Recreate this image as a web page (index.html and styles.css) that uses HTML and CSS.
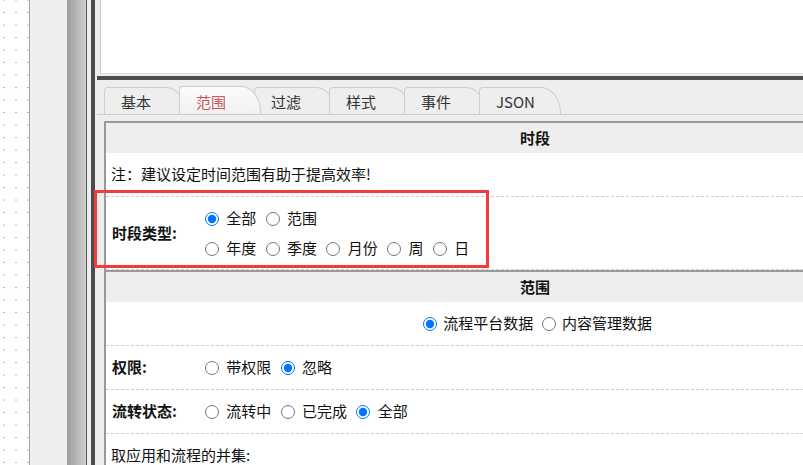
FILE: index.html
```html
<!DOCTYPE html>
<html lang="zh-CN">
<head>
<meta charset="utf-8">
<title>范围</title>
<link rel="stylesheet" href="styles.css">
</head>
<body>
<div class="app">
  <div class="canvas"></div>
  <div class="side"></div>
  <div class="splitter"></div>
  <div class="gap"></div>
  <div class="darkcol"></div>
  <div class="main">
    <div class="preview"></div>
    <div class="darkbar"></div>
    <div class="tabs">
      <div class="tab">基本</div>
      <div class="tab active">范围</div>
      <div class="tab">过滤</div>
      <div class="tab">样式</div>
      <div class="tab">事件</div>
      <div class="tab">JSON</div>
    </div>
    <div class="panel">
      <div class="head">时段</div>
      <div class="row note">注：建议设定时间范围有助于提高效率!</div>
      <div class="row form two">
        <div class="label">时段类型:</div>
        <div class="opts">
          <input type="radio" name="period" checked> 全部 <input type="radio" name="period"> 范围<br>
          <input type="radio" name="period"> 年度 <input type="radio" name="period"> 季度 <input type="radio" name="period"> 月份 <input type="radio" name="period"> 周 <input type="radio" name="period"> 日
        </div>
      </div>
      <div class="head">范围</div>
      <div class="row center">
        <input type="radio" name="src" checked> 流程平台数据 <input type="radio" name="src"> 内容管理数据
      </div>
      <div class="row form">
        <div class="label">权限:</div>
        <div class="opts">
          <input type="radio" name="perm"> 带权限 <input type="radio" name="perm" checked> 忽略
        </div>
      </div>
      <div class="row form">
        <div class="label">流转状态:</div>
        <div class="opts">
          <input type="radio" name="state"> 流转中 <input type="radio" name="state"> 已完成 <input type="radio" name="state" checked> 全部
        </div>
      </div>
      <div class="row note">取应用和流程的并集:</div>
    </div>
  </div>
</div>
<div class="highlight"></div>
</body>
</html>
```
FILE: styles.css
```css
html, body {
  margin: 0;
  padding: 0;
  height: 100%;
  overflow: hidden;
}
body {
  font-family: "Noto Sans CJK SC", "Microsoft YaHei", sans-serif;
  font-size: 15px;
  color: #111;
  background: #eee;
  position: relative;
}
.app {
  display: flex;
  height: 100vh;
}
.canvas {
  flex: 0 0 29px;
  border-right: 1px solid #a6a6a6;
  background-color: #fff;
  background-image: radial-gradient(circle, #b4b4b4 0.8px, transparent 1px);
  background-size: 12px 12.5px;
  background-position: -2px 6.3px;
}
.side {
  flex: 0 0 37px;
  background: #eee;
}
.splitter {
  flex: 0 0 19px;
  background: linear-gradient(to right, #9c9c9c, #d0d0d0);
  border-right: 1px solid #555;
}
.gap {
  flex: 0 0 4px;
  background: #eee;
}
.darkcol {
  flex: 0 0 4px;
  background: #4d4d4d;
}
.main {
  flex: 1 1 auto;
  min-width: 0;
  display: flex;
  flex-direction: column;
  background: #eee;
}
.preview {
  height: 73px;
  flex: 0 0 auto;
  margin-left: 5px;
  background: #fff;
  border-left: 1px solid #ccc;
  border-bottom: 1px solid #ddd;
}
.darkbar {
  height: 4px;
  flex: 0 0 auto;
  margin: 2px 0 0 2px;
  background: #4d4d4d;
}
.tabs {
  display: flex;
  align-items: flex-end;
  flex: 0 0 auto;
  margin-left: 2px;
  padding: 6px 0 0 7px;
  border-bottom: 1px solid #ccc;
}
.tab {
  position: relative;
  box-sizing: border-box;
  width: 82px;
  height: 27px;
  margin-left: -7px;
  padding: 3px 0 0 16px;
  line-height: 22px;
  font-size: 15px;
  color: #333;
  background: #eee;
  border: 1px solid #cdcdcd;
  border-bottom: 0;
  border-radius: 4px 20px 0 0 / 4px 26px 0 0;
}
.tab:first-child {
  margin-left: 0;
}
.tab.active {
  z-index: 10;
  height: 28px;
  padding-top: 4px;
  color: #d2555f;
  background: linear-gradient(#fbfbfb, #f1f1f1);
}
.panel {
  flex: 0 0 auto;
  width: 858px;
  margin: 6px 0 0 9px;
  border-left: 2px solid #999;
  background: #fff;
}
.head {
  border-top: 2px solid #999;
  background: #eee;
  line-height: 30px;
  text-align: center;
  font-weight: bold;
}
.row {
  padding: 6px 0 7px;
  line-height: 30px;
  border-bottom: 1px dashed #ccc;
}
.note {
  padding-left: 5px;
}
.center {
  text-align: center;
}
.form {
  display: flex;
  align-items: center;
}
.form.two {
  padding: 6px 0;
}
.label {
  flex: 0 0 88px;
  padding-left: 6px;
  font-weight: bold;
}
.opts {
  flex: 1 1 auto;
  word-spacing: 1px;
}
input[type="radio"] {
  width: 14px;
  height: 14px;
  margin: 3px 3px 0 5px;
  vertical-align: -2px;
}
.highlight {
  position: absolute;
  left: 94px;
  top: 190px;
  width: 389px;
  height: 72px;
  border: 3px solid #f33b3b;
}
```
